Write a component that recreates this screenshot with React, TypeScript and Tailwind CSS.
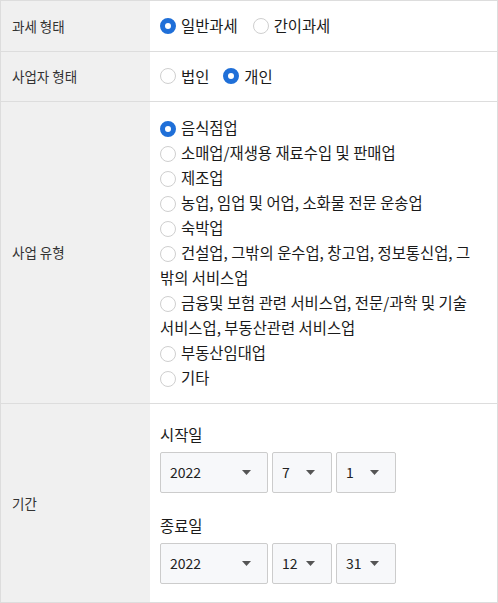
import React from "react";

const FONT = { fontFamily: '"Noto Sans CJK KR", "Noto Sans", sans-serif' };

function Radio({ checked }: { checked?: boolean }) {
  return checked ? (
    <span className="inline-block w-4 h-4 rounded-full border-[5px] border-[#1f6fd8] bg-white align-[-3px] mr-[5px]" />
  ) : (
    <span className="inline-block w-4 h-4 rounded-full border border-[#cfcfcf] bg-white align-[-3px] mr-[5px]" />
  );
}

function Caret() {
  return (
    <svg width="9" height="5" viewBox="0 0 9 5" className="shrink-0">
      <path d="M0 0h9L4.5 5z" fill="#555" />
    </svg>
  );
}

function Select({ value, width }: { value: string; width: string }) {
  return (
    <div
      className={`${width} h-[41px] flex items-center justify-between pl-[9px] pr-[16px] bg-[#f7f8fa] border border-[#cccccc] rounded-[2px] text-[14px] text-[#222]`}
    >
      <span>{value}</span>
      <Caret />
    </div>
  );
}

function Row({
  label,
  height,
  last,
  children,
}: {
  label: string;
  height: string;
  last?: boolean;
  children: React.ReactNode;
}) {
  return (
    <div className={`flex ${height} ${last ? "" : "border-b border-[#dddddd]"}`}>
      <div className="w-[149px] shrink-0 bg-[#f0f0f0] flex items-center pl-[11px] text-[13.5px] text-[#333]">
        {label}
      </div>
      <div className="flex-1 flex items-center pl-[10px] text-[15.4px] text-[#1a1a1a]">{children}</div>
    </div>
  );
}

const TYPES = [
  "음식점업",
  "소매업/재생용 재료수입 및 판매업",
  "제조업",
  "농업, 임업 및 어업, 소화물 전문 운송업",
  "숙박업",
  "건설업, 그밖의 운수업, 창고업, 정보통신업, 그밖의 서비스업",
  "금융및 보험 관련 서비스업, 전문/과학 및 기술서비스업, 부동산관련 서비스업",
  "부동산임대업",
  "기타",
];

export default function App() {
  return (
    <div className="w-[498px] h-[603px] bg-white" style={FONT}>
      <div className="border border-[#dddddd]">
        <Row label="과세 형태" height="h-[51px]">
          <label className="flex items-center mr-[15px]">
            <Radio checked />
            일반과세
          </label>
          <label className="flex items-center">
            <Radio />
            간이과세
          </label>
        </Row>
        <Row label="사업자 형태" height="h-[50px]">
          <label className="flex items-center mr-[14px]">
            <Radio />
            법인
          </label>
          <label className="flex items-center">
            <Radio checked />
            개인
          </label>
        </Row>
        <Row label="사업 유형" height="h-[302px]">
          <div className="pr-[20px] leading-[25px] break-all">
            {TYPES.map((t, i) => (
              <div key={t}>
                <Radio checked={i === 0} />
                {t}
              </div>
            ))}
          </div>
        </Row>
        <Row label="기간" height="h-[198px]" last>
          <div className="flex flex-col">
            <div className="leading-[22px] mb-[7px]">시작일</div>
            <div className="flex gap-[4px]">
              <Select value="2022" width="w-[108px]" />
              <Select value="7" width="w-[60px]" />
              <Select value="1" width="w-[60px]" />
            </div>
            <div className="leading-[22px] mt-[21px] mb-[7px]">종료일</div>
            <div className="flex gap-[4px]">
              <Select value="2022" width="w-[108px]" />
              <Select value="12" width="w-[60px]" />
              <Select value="31" width="w-[60px]" />
            </div>
          </div>
        </Row>
      </div>
    </div>
  );
}
